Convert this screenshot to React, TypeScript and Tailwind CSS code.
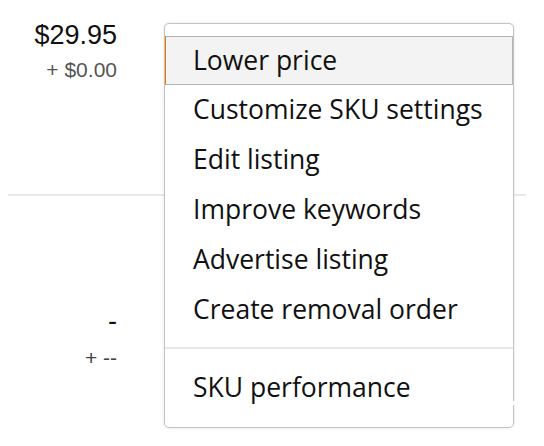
import React from "react";

const items = [
  "Customize SKU settings",
  "Edit listing",
  "Improve keywords",
  "Advertise listing",
  "Create removal order",
];

export default function App() {
  return (
    <div className="relative w-[544px] h-[446px] bg-white overflow-hidden font-['Liberation_Sans',Arial,sans-serif]">
      {/* table body behind the menu */}
      <div className="flex flex-col">
        <div className="w-[117px] pt-[19px] flex flex-col items-end">
          <div className="text-[27px] leading-[32px] text-[#111]">$29.95</div>
          <div className="mt-[7px] text-[21px] leading-[24px] text-[#555]">+ $0.00</div>
        </div>
        <div className="ml-[8px] mt-[112px] w-[518px] h-[2px] bg-[#e8e8e8]" />
        <div className="w-[117px] pt-[109px] flex flex-col items-end">
          <div className="text-[27px] leading-[32px] text-[#111]">-</div>
          <div className="mt-[9px] text-[21px] leading-[24px] text-[#444]">+ --</div>
        </div>
      </div>

      {/* dropdown menu */}
      <div className="absolute left-[164px] top-[23px] w-[350px] h-[405px] bg-white border border-[#c4c4c4] rounded-[5px] shadow-[0_0_3px_rgba(0,0,0,0.12)] pt-[12px] font-['Open_Sans','Noto_Sans',sans-serif] text-[26.5px] text-[#111]">
        <div className="h-[49px] flex items-center bg-[#f3f3f3] border border-[#b4b4b4] border-l-[#e77600] pl-[27px]">
          Lower price
        </div>
        {items.map((t) => (
          <div key={t} className="h-[50px] flex items-center pl-[28px]">
            {t}
          </div>
        ))}
        <div className="mt-[12px] h-[2px] bg-[#e8e8e8]" />
        <div className="mt-[14px] h-[50px] flex items-center pl-[28px]">SKU performance</div>
      </div>

      {/* small white notch over the menu's right edge */}
      <div className="absolute left-[511px] top-[401px] w-[14px] h-[4px] bg-white" />
    </div>
  );
}
